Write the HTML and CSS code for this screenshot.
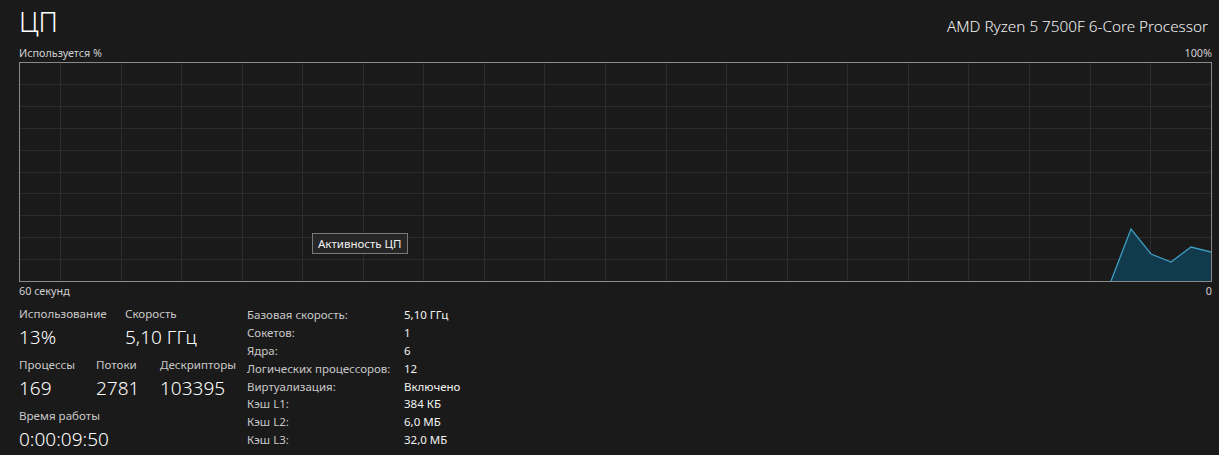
FILE: index.html
```html
<!DOCTYPE html>
<html lang="ru">
<head>
<meta charset="utf-8">
<title>ЦП</title>
<link rel="stylesheet" href="styles.css">
</head>
<body>
<div class="page">
  <header class="header">
    <h1 class="title">ЦП</h1>
    <div class="cpu-name">AMD Ryzen 5 7500F 6-Core Processor</div>
  </header>
  <div class="axis-row top">
    <span>Используется %</span>
    <span>100%</span>
  </div>
  <div class="graph">
    <svg class="graph-svg" width="1191" height="218" viewBox="0 0 1191 218">
      <g class="grid">
        <line x1="0" y1="21.5" x2="1191" y2="21.5"/>
        <line x1="0" y1="43.5" x2="1191" y2="43.5"/>
        <line x1="0" y1="65.5" x2="1191" y2="65.5"/>
        <line x1="0" y1="87.5" x2="1191" y2="87.5"/>
        <line x1="0" y1="109.5" x2="1191" y2="109.5"/>
        <line x1="0" y1="130.5" x2="1191" y2="130.5"/>
        <line x1="0" y1="152.5" x2="1191" y2="152.5"/>
        <line x1="0" y1="174.5" x2="1191" y2="174.5"/>
        <line x1="0" y1="196.5" x2="1191" y2="196.5"/>
        <line x1="40.5" y1="0" x2="40.5" y2="218"/>
        <line x1="101.5" y1="0" x2="101.5" y2="218"/>
        <line x1="161.5" y1="0" x2="161.5" y2="218"/>
        <line x1="222.5" y1="0" x2="222.5" y2="218"/>
        <line x1="282.5" y1="0" x2="282.5" y2="218"/>
        <line x1="343.5" y1="0" x2="343.5" y2="218"/>
        <line x1="403.5" y1="0" x2="403.5" y2="218"/>
        <line x1="464.5" y1="0" x2="464.5" y2="218"/>
        <line x1="524.5" y1="0" x2="524.5" y2="218"/>
        <line x1="585.5" y1="0" x2="585.5" y2="218"/>
        <line x1="646.5" y1="0" x2="646.5" y2="218"/>
        <line x1="706.5" y1="0" x2="706.5" y2="218"/>
        <line x1="767.5" y1="0" x2="767.5" y2="218"/>
        <line x1="827.5" y1="0" x2="827.5" y2="218"/>
        <line x1="888.5" y1="0" x2="888.5" y2="218"/>
        <line x1="948.5" y1="0" x2="948.5" y2="218"/>
        <line x1="1009.5" y1="0" x2="1009.5" y2="218"/>
        <line x1="1070.5" y1="0" x2="1070.5" y2="218"/>
        <line x1="1130.5" y1="0" x2="1130.5" y2="218"/>
      </g>
      <polygon class="area" points="1091,218 1111,166 1131,191 1151,199 1171,184 1191,189 1191,218"/>
      <polyline class="line" points="1091,218 1111,166 1131,191 1151,199 1171,184 1191,189"/>
    </svg>
    <div class="tooltip">Активность ЦП</div>
  </div>
  <div class="axis-row bottom">
    <span>60 секунд</span>
    <span>0</span>
  </div>
  <section class="details">
    <div class="stats">
      <div class="stat-row">
        <div class="stat w-usage"><div class="label">Использование</div><div class="value">13%</div></div>
        <div class="stat"><div class="label">Скорость</div><div class="value">5,10 ГГц</div></div>
      </div>
      <div class="stat-row">
        <div class="stat w-proc"><div class="label">Процессы</div><div class="value">169</div></div>
        <div class="stat w-threads"><div class="label">Потоки</div><div class="value">2781</div></div>
        <div class="stat"><div class="label">Дескрипторы</div><div class="value">103395</div></div>
      </div>
      <div class="stat-row">
        <div class="stat"><div class="label">Время работы</div><div class="value">0:00:09:50</div></div>
      </div>
    </div>
    <dl class="props">
      <dt>Базовая скорость:</dt><dd>5,10 ГГц</dd>
      <dt>Сокетов:</dt><dd>1</dd>
      <dt>Ядра:</dt><dd>6</dd>
      <dt>Логических процессоров:</dt><dd>12</dd>
      <dt>Виртуализация:</dt><dd>Включено</dd>
      <dt>Кэш L1:</dt><dd>384 КБ</dd>
      <dt>Кэш L2:</dt><dd>6,0 МБ</dd>
      <dt>Кэш L3:</dt><dd>32,0 МБ</dd>
    </dl>
  </section>
</div>
</body>
</html>
```
FILE: styles.css
```css
html, body {
  margin: 0;
  padding: 0;
  background: #1a1a1a;
  color: #ffffff;
  font-family: "Noto Sans", "Open Sans", sans-serif;
}

.page {
  padding: 0 7px 0 19px;
  width: 1193px;
}

.header {
  display: flex;
  justify-content: space-between;
  align-items: baseline;
  height: 44px;
}

.title {
  margin: 0;
  font-size: 27px;
  font-weight: 300;
  line-height: 44px;
  color: #ffffff;
}

.cpu-name {
  font-size: 15.3px;
  font-weight: 300;
  color: #f4f4f4;
  padding-right: 4px;
}

.axis-row {
  display: flex;
  justify-content: space-between;
  font-size: 10.8px;
  color: #d0d0d0;
}

.axis-row.top {
  height: 18px;
  line-height: 18px;
}

.axis-row.bottom {
  height: 18px;
  line-height: 18px;
}

.graph {
  position: relative;
  width: 1191px;
  height: 218px;
  border: 1px solid #8a8a8a;
}

.graph-svg {
  display: block;
}

.grid line {
  stroke: #2c2c2c;
  stroke-width: 1;
}

.area {
  fill: #113b4d;
}

.line {
  fill: none;
  stroke: #3e9cc0;
  stroke-width: 1.3;
}

.tooltip {
  position: absolute;
  left: 292px;
  top: 170px;
  padding: 2px 5px;
  font-size: 11.5px;
  line-height: 15px;
  background: #262626;
  border: 1px solid #7a7a7a;
  color: #f2f2f2;
}

.details {
  display: flex;
  gap: 8px;
  padding-top: 6px;
}

.stats {
  width: 220px;
  display: flex;
  flex-direction: column;
  gap: 5px;
}

.stat-row {
  display: flex;
}

.w-usage { width: 106px; }
.w-proc { width: 77px; }
.w-threads { width: 64px; }

.label {
  font-size: 11.6px;
  line-height: 16px;
  color: #c8c8c8;
}

.value {
  font-size: 19px;
  line-height: 30px;
  font-weight: 300;
  color: #ffffff;
}

.props {
  margin: 0;
  display: grid;
  grid-template-columns: 157px auto;
  grid-auto-rows: 17.9px;
  font-size: 11.5px;
  line-height: 18px;
  padding-top: 0;
}

.props dt {
  color: #c8c8c8;
}

.props dd {
  margin: 0;
  color: #f2f2f2;
}
```
